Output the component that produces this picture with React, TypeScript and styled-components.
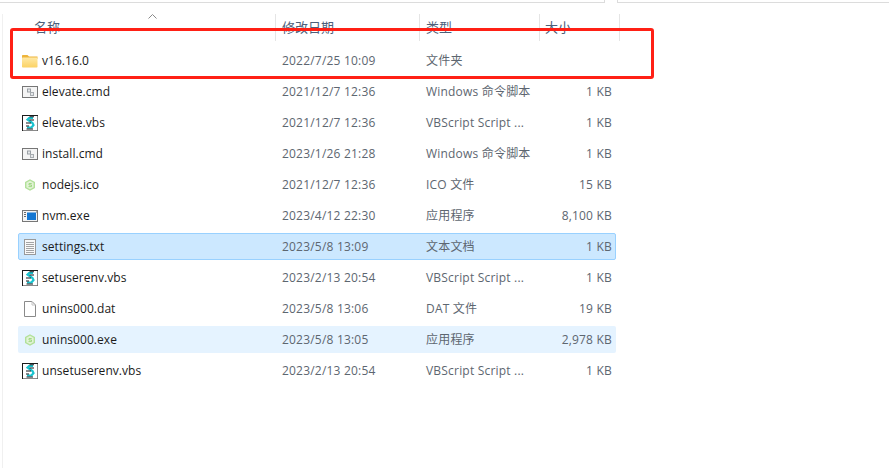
import styled, { createGlobalStyle } from 'styled-components';

type IconKind = 'folder' | 'cmd' | 'vbs' | 'node' | 'exe' | 'txt' | 'blank';

interface FileRow {
  name: string;
  date: string;
  type: string;
  size: string;
  icon: IconKind;
  state?: 'selected' | 'hover';
}

const rows: FileRow[] = [
  { name: 'v16.16.0', date: '2022/7/25 10:09', type: '文件夹', size: '', icon: 'folder' },
  { name: 'elevate.cmd', date: '2021/12/7 12:36', type: 'Windows 命令脚本', size: '1 KB', icon: 'cmd' },
  { name: 'elevate.vbs', date: '2021/12/7 12:36', type: 'VBScript Script ...', size: '1 KB', icon: 'vbs' },
  { name: 'install.cmd', date: '2023/1/26 21:28', type: 'Windows 命令脚本', size: '1 KB', icon: 'cmd' },
  { name: 'nodejs.ico', date: '2021/12/7 12:36', type: 'ICO 文件', size: '15 KB', icon: 'node' },
  { name: 'nvm.exe', date: '2023/4/12 22:30', type: '应用程序', size: '8,100 KB', icon: 'exe' },
  { name: 'settings.txt', date: '2023/5/8 13:09', type: '文本文档', size: '1 KB', icon: 'txt', state: 'selected' },
  { name: 'setuserenv.vbs', date: '2023/2/13 20:54', type: 'VBScript Script ...', size: '1 KB', icon: 'vbs' },
  { name: 'unins000.dat', date: '2023/5/8 13:06', type: 'DAT 文件', size: '19 KB', icon: 'blank' },
  { name: 'unins000.exe', date: '2023/5/8 13:05', type: '应用程序', size: '2,978 KB', icon: 'node', state: 'hover' },
  { name: 'unsetuserenv.vbs', date: '2023/2/13 20:54', type: 'VBScript Script ...', size: '1 KB', icon: 'vbs' },
];

const GlobalStyle = createGlobalStyle`
  html, body {
    margin: 0;
    padding: 0;
    background: #fff;
    overflow: hidden;
  }
  body {
    font-family: "Open Sans", "Noto Sans CJK SC", sans-serif;
  }
`;

const Page = styled.div`
  position: relative;
  width: 889px;
  height: 468px;
  background: #fff;
  overflow: hidden;
`;

const TopStrip = styled.div`
  display: flex;
  height: 3px;
`;

const TopLeft = styled.div`
  box-sizing: border-box;
  width: 605px;
  border-right: 1px solid #dcdcdc;
  border-bottom: 1px solid #dcdcdc;
`;

const TopRight = styled.div`
  margin-left: 12px;
  flex: 1;
  border-left: 1px solid #dcdcdc;
  border-bottom: 1px solid #dcdcdc;
`;

const Pane = styled.div`
  box-sizing: border-box;
  height: 454px;
  margin: 11px 0 0 2px;
  padding-left: 15px;
  border-left: 1px solid #f0f0f0;
`;

const HeaderRow = styled.div`
  position: relative;
  display: grid;
  grid-template-columns: 258px 144px 120px 80px;
  width: 602px;
  height: 27px;
  margin-bottom: 6px;
`;

const HeaderCell = styled.div<{ $pad: number }>`
  border-right: 1px solid #e5e5e5;
  padding-left: ${(p) => p.$pad}px;
  font-size: 13px;
  line-height: 27px;
  color: #4c607a;
`;

const SortArrow = styled.svg`
  position: absolute;
  left: 130px;
  top: 0;
`;

const Row = styled.div<{ $state?: 'selected' | 'hover' }>`
  display: grid;
  grid-template-columns: 257px 144px 120px 75px;
  align-items: center;
  box-sizing: border-box;
  width: 598px;
  height: 27px;
  margin-bottom: 4px;
  border-radius: 2px;
  border: 1px solid ${(p) => (p.$state === 'selected' ? '#99d1ff' : 'transparent')};
  background: ${(p) =>
    p.$state === 'selected' ? '#cce8ff' : p.$state === 'hover' ? '#e5f3ff' : 'transparent'};
`;

const NameCell = styled.div`
  display: flex;
  align-items: center;
  gap: 4px;
  padding-left: 3px;
  font-size: 12px;
  letter-spacing: 0.05px;
  line-height: 25px;
  color: #1a1a1a;
`;

const DetailCell = styled.div<{ $right?: boolean }>`
  padding: ${(p) => (p.$right ? '0 3px 0 0' : '0 0 0 6px')};
  font-size: 12px;
  letter-spacing: 0.2px;
  line-height: 25px;
  color: #5d6670;
  white-space: nowrap;
  text-align: ${(p) => (p.$right ? 'right' : 'left')};
`;

const Highlight = styled.div`
  position: absolute;
  left: 10px;
  top: 28px;
  width: 638px;
  height: 45px;
  border: 3px solid #ff2015;
  border-radius: 3px;
`;

function FileIcon({ kind }: { kind: IconKind }) {
  if (kind === 'folder') {
    return (
      <svg width="16" height="16" viewBox="0 0 16 16">
        <defs>
          <linearGradient id="folderFill" x1="0" y1="0" x2="0" y2="1">
            <stop offset="0" stopColor="#ffe9a6" />
            <stop offset="1" stopColor="#fbd264" />
          </linearGradient>
        </defs>
        <path d="M0 3C0 2.400.4 2 1 2h4.500l1.500 1.500h8.500V6H0z" fill="#eeb43a" />
        <rect x="0" y="4.500" width="15.500" height="10" rx="0.800" fill="url(#folderFill)" />
      </svg>
    );
  }
  if (kind === 'cmd') {
    return (
      <svg width="16" height="16" viewBox="0 0 16 16">
        <rect x="0.500" y="2.500" width="15" height="11" fill="#f4f4f4" stroke="#767676" />
        <rect x="5" y="4.500" width="4" height="4" fill="#9aa0a5" />
        <rect x="8" y="8" width="4" height="4" fill="#a7acb0" />
        <path d="M6 5.500h2v2H6zM9 9h2v2H9z" fill="#e6e8ea" />
      </svg>
    );
  }
  if (kind === 'vbs') {
    return (
      <svg width="16" height="16" viewBox="0 0 16 16">
        <rect x="0.500" y="0.500" width="15" height="15" fill="#fff" stroke="#1c1c1c" />
        <path d="M11 3H7L5.500 4.500l5 3.500 1 2-2 2.500H5" fill="none" stroke="#19c3cf" strokeWidth="2.200" />
        <path d="M12 1.800H7.500M12 5H7.500M4 8h5M4 11h3M4.500 14h6.500" stroke="#14171c" strokeWidth="1.100" />
        <path d="M15.500 1v14.500H1" fill="none" stroke="#8a8a8a" />
      </svg>
    );
  }
  if (kind === 'node') {
    return (
      <svg width="16" height="16" viewBox="0 0 16 16">
        <path d="M8 3l4.300 2.500v5L8 13l-4.300-2.500v-5z" fill="#e2f3d6" stroke="#b2e09a" strokeWidth="1.400" />
        <path d="M9.700 6.500H7v1.500h2.500v1.600H6.500" fill="none" stroke="#9ad57e" strokeWidth="0.900" />
      </svg>
    );
  }
  if (kind === 'exe') {
    return (
      <svg width="16" height="16" viewBox="0 0 16 16">
        <rect x="0.500" y="2.500" width="15" height="11" fill="#f4f4f4" stroke="#777" />
        <rect x="5" y="4.500" width="9" height="7.500" fill="#1577d2" />
        <path d="M2 4.500h2M2 6.500h2M2 8.500h2M14.500 3.500v1" stroke="#6b6b6b" />
      </svg>
    );
  }
  if (kind === 'txt') {
    return (
      <svg width="16" height="16" viewBox="0 0 16 16">
        <rect x="2.500" y="0.500" width="11" height="15" fill="#f9f9f9" stroke="#999" />
        <path d="M4 3.500h8M4 5.500h8M4 7.500h8M4 9.500h8M4 11.500h8M4 13.500h8" stroke="#a4a4a4" />
      </svg>
    );
  }
  return (
    <svg width="16" height="16" viewBox="0 0 16 16">
      <path d="M2.500.500h7.500l3.500 3.500v11.500h-11z" fill="#fff" stroke="#8a8a8a" />
      <path d="M10 .500v3.500h3.500" fill="none" stroke="#c4c4c4" />
    </svg>
  );
}

export default function App() {
  return (
    <Page>
      <GlobalStyle />
      <TopStrip>
        <TopLeft />
        <TopRight />
      </TopStrip>
      <Pane>
        <HeaderRow>
          <HeaderCell $pad={16}>名称</HeaderCell>
          <HeaderCell $pad={6}>修改日期</HeaderCell>
          <HeaderCell $pad={6}>类型</HeaderCell>
          <HeaderCell $pad={5}>大小</HeaderCell>
          <SortArrow width="9" height="5" viewBox="0 0 9 5">
            <path d="M.5 4.500l4-4 4 4" fill="none" stroke="#8a8a8a" />
          </SortArrow>
        </HeaderRow>
        {rows.map((r) => (
          <Row key={r.name} $state={r.state}>
            <NameCell>
              <FileIcon kind={r.icon} />
              {r.name}
            </NameCell>
            <DetailCell>{r.date}</DetailCell>
            <DetailCell>{r.type}</DetailCell>
            <DetailCell $right>{r.size}</DetailCell>
          </Row>
        ))}
      </Pane>
      <Highlight />
    </Page>
  );
}
